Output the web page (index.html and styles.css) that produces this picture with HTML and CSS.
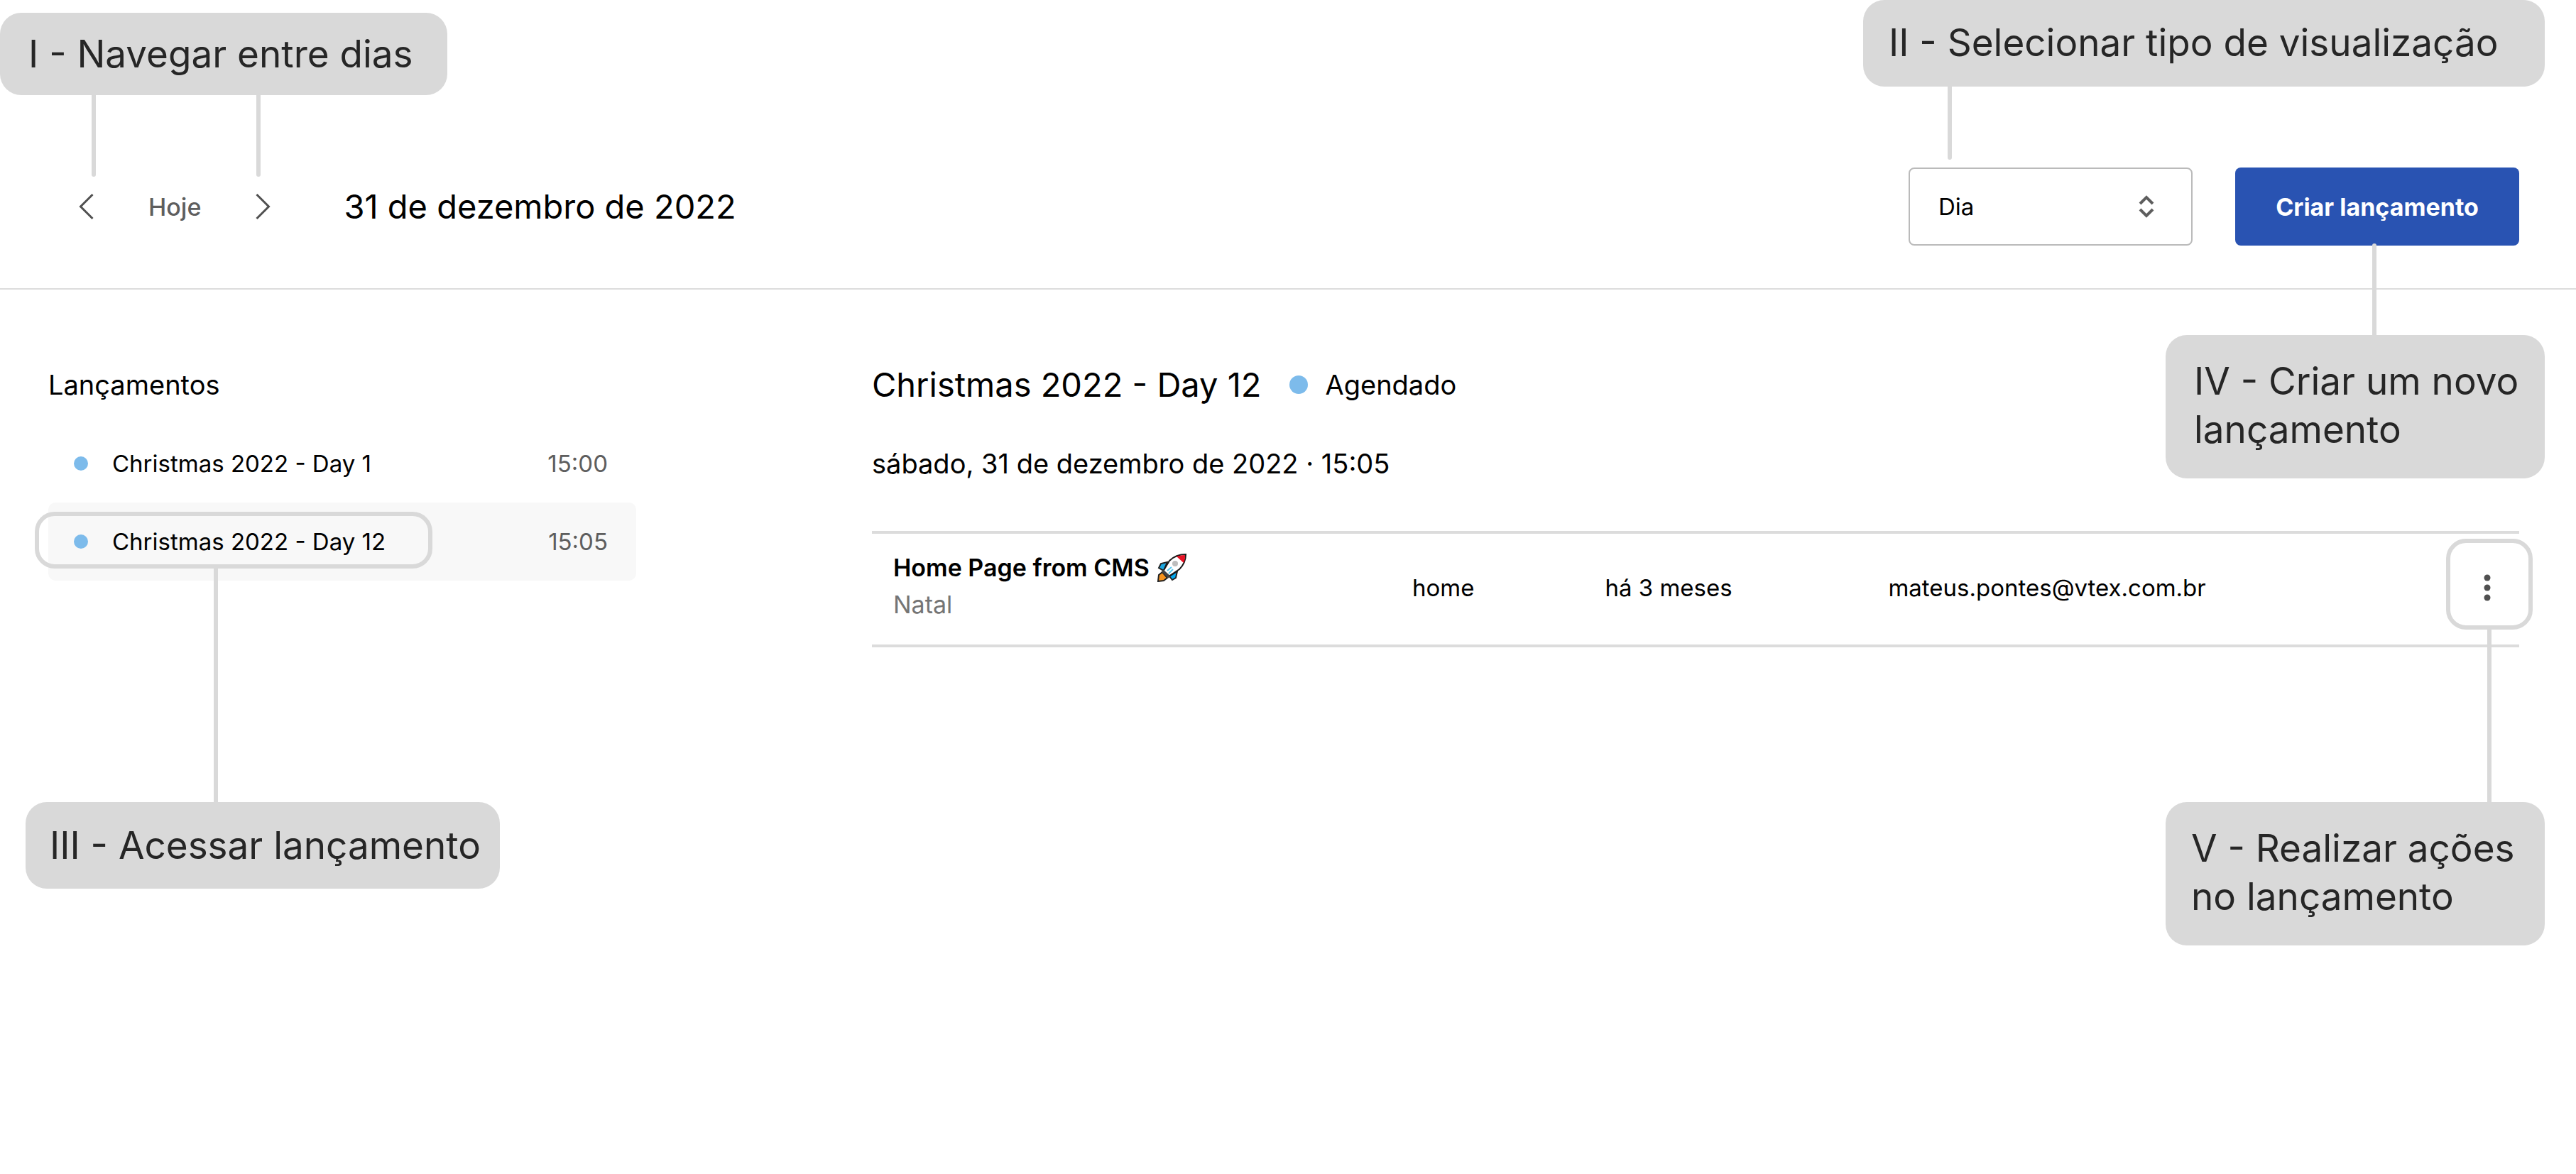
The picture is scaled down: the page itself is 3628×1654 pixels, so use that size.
FILE: index.html
```html
<!DOCTYPE html>
<html lang="pt-BR">
<head>
<meta charset="utf-8">
<meta name="viewport" content="width=device-width, initial-scale=1">
<title>Lançamentos</title>
<link rel="stylesheet" href="styles.css">
</head>
<body>
<div class="page">
  <header class="toolbar">
    <nav class="day-nav" aria-label="Dias">
      <button class="icon-button" type="button" aria-label="Dia anterior">
        <svg class="chevron" viewBox="0 0 22 38" aria-hidden="true"><path d="M19.500 2 2.500 19 19.500 36"/></svg>
      </button>
      <button class="today" type="button">Hoje</button>
      <button class="icon-button" type="button" aria-label="Próximo dia">
        <svg class="chevron" viewBox="0 0 22 38" aria-hidden="true"><path d="M2.500 2 19.500 19 2.500 36"/></svg>
      </button>
    </nav>
    <h1 class="current-date">31 de dezembro de 2022</h1>
    <div class="view-select">
      <select aria-label="Tipo de visualização">
        <option>Dia</option>
      </select>
      <svg class="sort-icon" viewBox="0 0 24 34" aria-hidden="true"><path d="M3 13 12 4 21 13M3 21 12 30 21 21"/></svg>
    </div>
    <button class="primary" type="button">Criar lançamento</button>
  </header>

  <div class="content">
    <aside class="sidebar">
      <h2 class="sidebar-title">Lançamentos</h2>
      <ul class="release-list">
        <li><a class="release" href="#dia-1"><span class="dot"></span><span class="release-name">Christmas 2022 - Day 1</span><time>15:00</time></a></li>
        <li><a class="release selected" href="#dia-12" aria-current="true"><span class="dot"></span><span class="release-name">Christmas 2022 - Day 12</span><time>15:05</time></a></li>
      </ul>
    </aside>

    <main class="detail">
      <div class="detail-head">
        <h2 class="detail-title">Christmas 2022 - Day 12</h2>
        <span class="status"><span class="dot dot-large"></span>Agendado</span>
      </div>
      <p class="detail-date">sábado, 31 de dezembro de 2022 · 15:05</p>
      <table class="pages">
        <colgroup><col class="col-name"><col class="col-type"><col class="col-age"><col><col class="col-menu"></colgroup>
        <tbody>
          <tr>
            <td class="name-cell">
              <div class="page-name">Home Page from CMS
                <svg class="rocket" viewBox="0 0 42 40" role="img" aria-label="foguete">
                  <path d="M14 12 5 14 2 20 9 24Z" fill="#1ba7e0" stroke="#222" stroke-width="2"/>
                  <path d="M17 32 21 37 26 34 28 25Z" fill="#00a8f0" stroke="#222" stroke-width="2"/>
                  <path d="M7 26 2 30 1 39 9 38 14 34Z" fill="#f7931e" stroke="#222" stroke-width="2"/>
                  <path d="M40 1C31 1 23 4 17 10L8 25 16 32 31 22C37 16 40 9 40 1Z" fill="#fff" stroke="#1a1a1a" stroke-width="2"/>
                  <path d="M39 2C34 2 30 3 27 4L37 13C39 9 39 5 39 2Z" fill="#e81224"/>
                  <circle cx="25" cy="14" r="4" fill="#bdbdbd"/>
                  <path d="M14 24 20 19M16 28 22 22" stroke="#5ac8ef" stroke-width="2"/>
                  <path d="M7 24 17 33" stroke="#444" stroke-width="4"/>
                </svg>
              </div>
              <div class="page-group">Natal</div>
            </td>
            <td>home</td>
            <td>há 3 meses</td>
            <td>mateus.pontes@vtex.com.br</td>
            <td class="menu-cell">
              <button class="more" type="button" aria-label="Ações">
                <svg viewBox="0 0 10 38" aria-hidden="true"><circle cx="5" cy="5" r="4.500"/><circle cx="5" cy="19" r="4.500"/><circle cx="5" cy="33" r="4.500"/></svg>
              </button>
            </td>
          </tr>
        </tbody>
      </table>
    </main>
  </div>

  <div class="outline outline-release"></div>
  <div class="outline outline-menu"></div>
  <div class="note note-nav">I - Navegar entre dias</div>
  <div class="note note-view">II - Selecionar tipo de visualização</div>
  <div class="note note-open">III - Acessar lançamento</div>
  <div class="note note-create">IV - Criar um novo<br>lançamento</div>
  <div class="note note-actions">V - Realizar ações<br>no lançamento</div>
</div>
</body>
</html>
```
FILE: styles.css
```css
:root {
  --text-s: 33px;
  --text-strong: 34px;
  --text-m: 38px;
  --text-l: 47px;
  --text-xl: 53px;
  --note: #d9d9d9;
  --line: #dcdcdc;
  --muted: #5e5e5e;
}

* { box-sizing: border-box; }

body {
  margin: 0;
  background: #fff;
  color: #000;
  font-family: Inter, "Liberation Sans", sans-serif;
  font-size: var(--text-s);
}

h1, h2, p, ul { margin: 0; padding: 0; font-weight: 400; }
button, select { font: inherit; }
button { border: 0; padding: 0; background: none; color: var(--muted); cursor: pointer; }

.page { position: relative; min-height: 100vh; }

/* Toolbar */
.toolbar {
  display: flex;
  align-items: center;
  padding: 236px 80px 60px 98px;
  border-bottom: 2px solid var(--line);
}
.day-nav { display: flex; align-items: center; gap: 63px; }
.icon-button { display: flex; justify-content: center; width: 48px; }
.chevron { width: 22px; height: 38px; fill: none; stroke: #505050; stroke-width: 3; }
.today { font-size: var(--text-strong); font-weight: 500; }
.current-date { margin-left: 90px; font-size: var(--text-l); line-height: 56px; }
.view-select { position: relative; width: 400px; margin-left: auto; }
.view-select select {
  appearance: none;
  display: block;
  width: 100%;
  height: 110px;
  padding: 0 40px;
  border: 2px solid #bababa;
  border-radius: 8px;
  background: #fff;
  color: #000;
}
.sort-icon {
  position: absolute;
  top: 38px;
  right: 53px;
  width: 24px;
  height: 34px;
  fill: none;
  stroke: var(--muted);
  stroke-width: 4;
  pointer-events: none;
}
.primary {
  width: 400px;
  height: 110px;
  margin-left: 60px;
  border-radius: 8px;
  background: #2953b2;
  color: #fff;
  font-size: var(--text-strong);
  font-weight: 700;
}

/* Content */
.content {
  display: grid;
  grid-template-columns: 1fr 2fr;
  padding: 100px 80px 0 68px;
}
.sidebar { padding-right: 332px; }
.sidebar-title { margin-bottom: 22px; font-size: var(--text-m); line-height: 68px; }
.release-list { list-style: none; }
.release {
  display: flex;
  align-items: center;
  height: 110px;
  padding: 0 40px 0 36px;
  border-radius: 10px;
  color: #000;
  text-decoration: none;
}
.release.selected { background: #f8f8f8; }
.release-name { margin-left: 34px; }
.release time { margin-left: auto; color: var(--muted); }
.dot { width: 20px; height: 20px; border-radius: 50%; background: #7dbbeb; }
.dot-large { width: 26px; height: 26px; }

.detail-head { display: flex; align-items: center; gap: 40px; line-height: 68px; }
.detail-title { font-size: var(--text-l); }
.status { display: flex; align-items: center; gap: 24px; font-size: var(--text-m); }
.detail-date { margin: 53px 0 71px; font-size: var(--text-m); line-height: 48px; }

.pages { width: 100%; table-layout: fixed; border-spacing: 0; }
.col-name { width: 32.8%; }
.col-type { width: 11.7%; }
.col-age { width: 17.2%; }
.col-menu { width: 160px; }
.pages td {
  height: 164px;
  padding: 0 0 4px;
  border: solid var(--line);
  border-width: 4px 0;
}
.pages .name-cell { padding: 0 0 8px 30px; }
.page-name { display: flex; align-items: center; gap: 11px; font-size: var(--text-strong); font-weight: 600; line-height: 52px; }
.rocket { width: 42px; height: 40px; }
.page-group { color: #757575; font-size: var(--text-strong); line-height: 52px; }
.pages .menu-cell { padding-right: 15px; }
.more { display: flex; align-items: center; justify-content: center; width: 60px; height: 60px; margin-left: auto; }
.more svg { width: 10px; height: 38px; fill: #505050; }

/* Annotations laid over the screen */
.note {
  position: absolute;
  padding: 27px 36px;
  border-radius: 30px;
  background: var(--note);
  color: #262626;
  font-size: var(--text-xl);
  line-height: 68px;
  white-space: nowrap;
}
.note::before, .note::after { position: absolute; width: 6px; background: var(--note); }
.note-nav { top: 18px; left: 0; width: 630px; padding: 24px 40px; }
.note-nav::before, .note-nav::after { content: ""; top: 100%; height: 115px; border-radius: 0 0 3px 3px; }
.note-nav::before { left: 129px; }
.note-nav::after { left: 361px; }
.note-view { top: 0; right: 44px; width: 960px; padding: 26px 36px 28px; }
.note-view::before { content: ""; top: 100%; left: 119px; height: 103px; border-radius: 0 0 3px 3px; }
.note-open { top: 1130px; left: 36px; width: 668px; padding: 27px 34px; }
.note-open::before { content: ""; bottom: 100%; left: 265px; height: 329px; }
.note-create { top: 472px; right: 44px; width: 534px; padding: 31px 40px 35px; }
.note-create::before { content: ""; bottom: 100%; left: 291px; height: 129px; border-radius: 3px 3px 0 0; }
.note-actions { top: 1130px; right: 44px; width: 534px; padding: 31px 36px 35px; }
.note-actions::before { content: ""; bottom: 100%; left: 453px; height: 243px; }
.outline { position: absolute; border: 6px solid var(--note); border-radius: 28px; pointer-events: none; }
.outline-release { top: 721px; left: 49px; width: 560px; height: 80px; }
.outline-menu { top: 759px; right: 61px; width: 122px; height: 128px; }
```
